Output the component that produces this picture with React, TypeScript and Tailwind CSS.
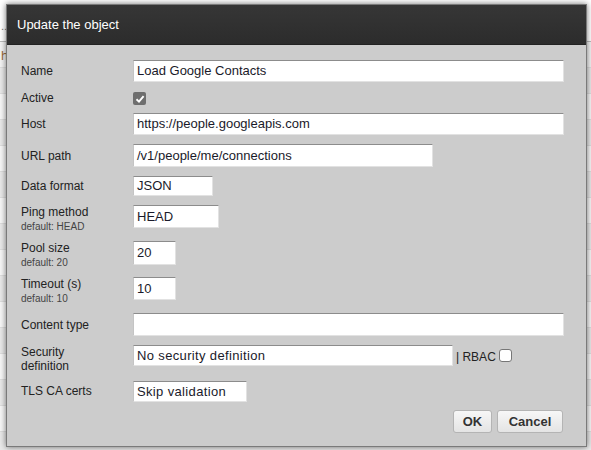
import React from 'react';

const font = { fontFamily: '"Liberation Sans", Arial, sans-serif' };

// Field input with the inset look of the old form widgets
function Field({ value, width, height = 22, wide = false }: { value: string; width: number; height?: number; wide?: boolean }) {
  return (
    <div
      className={`bg-white border border-t-[#8c8c8c] border-l-[#c4c4c4] border-r-[#e2e2e2] border-b-[#e2e2e2] pl-[3px] flex items-center text-[13px] text-[#1a1a2a] whitespace-nowrap overflow-hidden ${wide ? 'tracking-[0.35px]' : ''}`}
      style={{ width, height }}
    >
      {value}
    </div>
  );
}

function Row({ label, hint, height, children }: { label: React.ReactNode; hint?: string; height: number; children: React.ReactNode }) {
  return (
    <div className="flex items-start" style={{ height }}>
      <div className="w-[112px] text-[12px] leading-[14px] text-[#222]">
        {label}
        {hint && <div className="text-[10px] leading-[13px] text-[#444] mt-[1px]">{hint}</div>}
      </div>
      {children}
    </div>
  );
}

export default function App() {
  const bgRows = Array.from({ length: 17 });
  return (
    <div className="relative w-[591px] h-[450px] bg-white overflow-hidden" style={font}>
      {/* page behind the dialog */}
      <div className="flex flex-col">
        <div className="h-[42px] border-b border-[#bbb] text-[11px] text-[#777] pt-[18px] pl-[1px]">...</div>
        <div className="h-[26px] bg-[#f3f3f3] border-b border-[#ddd] text-[13px] text-[#9a6a3a] pl-[1px] pt-[4px]">h</div>
        {bgRows.map((_, i) => (
          <div key={i} className={`h-[26px] border-b border-[#ddd] ${i % 2 === 0 ? 'bg-[#e9e9e9]' : 'bg-[#f7f7f7]'}`} />
        ))}
      </div>

      {/* dialog */}
      <div className="absolute left-[6px] top-[4px] w-[581px] h-[443px] bg-[#cccccc] border border-[#7a7a7a] shadow-[0_0_6px_rgba(0,0,0,0.55)] flex flex-col">
        <div className="h-[40px] bg-gradient-to-b from-[#363636] to-[#2c2c2c] flex items-center pl-[10px] text-[13px] text-white border-b border-[#222]">
          Update the object
        </div>
        <div className="flex flex-col pl-[14px] pt-[15px]">
          <Row label={<div className="pt-[4px]">Name</div>} height={31}>
            <Field value="Load Google Contacts" width={431} />
          </Row>
          <Row label="Active" height={22}>
            <div className="w-[13px] h-[13px] mt-[1px] rounded-[2px] bg-[#6e6e6e] flex items-center justify-center">
              <svg width="10" height="10" viewBox="0 0 10 10">
                <path d="M1.5 5.2 L4 7.6 L8.6 2.2" stroke="white" strokeWidth="1.9" fill="none" />
              </svg>
            </div>
          </Row>
          <Row label={<div className="pt-[4px]">Host</div>} height={31}>
            <Field value="https://people.googleapis.com" width={431} />
          </Row>
          <Row label={<div className="pt-[5px]">URL path</div>} height={32}>
            <Field value="/v1/people/me/connections" width={300} height={23} />
          </Row>
          <Row label={<div className="pt-[3px]">Data format</div>} height={29}>
            <Field value="JSON" width={80} height={20} />
          </Row>
          <Row label="Ping method" hint="default: HEAD" height={36}>
            <Field value="HEAD" width={86} height={23} />
          </Row>
          <Row label="Pool size" hint="default: 20" height={36}>
            <Field value="20" width={43} height={24} />
          </Row>
          <Row label="Timeout (s)" hint="default: 10" height={36}>
            <Field value="10" width={43} height={23} />
          </Row>
          <Row label={<div className="pt-[5px]">Content type</div>} height={32}>
            <Field value="" width={431} height={23} />
          </Row>
          <Row label={<div>Security<br />definition</div>} height={36}>
            <Field value="No security definition" width={320} height={21} wide />
            <span className="ml-[3px] mt-[3px] text-[12px] text-[#222]">| RBAC</span>
            <div className="ml-[3px] mt-[4px] w-[13px] h-[13px] rounded-[3px] bg-white border border-[#767676]" />
          </Row>
          <Row label={<div className="pt-[3px]">TLS CA certs</div>} height={29}>
            <Field value="Skip validation" width={114} height={21} wide />
          </Row>
          <div className="flex justify-end gap-[5px] w-[542px]">
            <button className="w-[39px] h-[23px] rounded-[3px] border border-[#b4b4b4] bg-gradient-to-b from-[#f7f7f7] to-[#e4e4e4] text-[13px] font-bold text-[#333]">
              OK
            </button>
            <button className="w-[66px] h-[23px] rounded-[3px] border border-[#b4b4b4] bg-gradient-to-b from-[#f7f7f7] to-[#e4e4e4] text-[13px] font-bold text-[#333]">
              Cancel
            </button>
          </div>
        </div>
      </div>
    </div>
  );
}
